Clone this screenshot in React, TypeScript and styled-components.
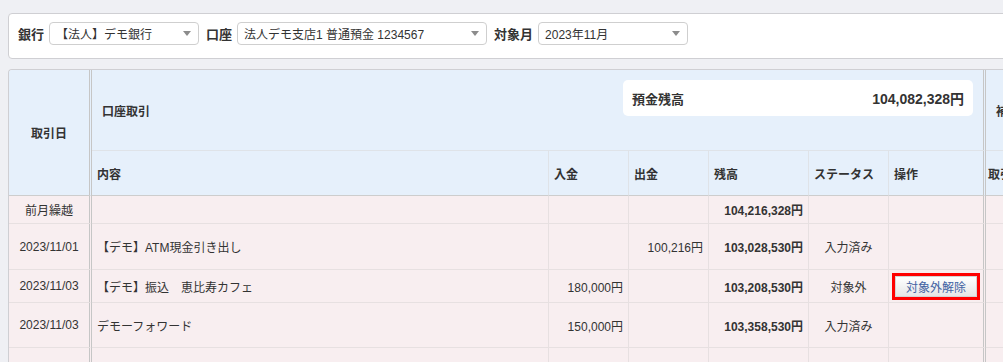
import React from "react";
import styled, { createGlobalStyle } from "styled-components";

const GlobalStyle = createGlobalStyle`
  html, body {
    margin: 0;
    padding: 0;
    overflow: hidden;
    background: #eff0f4;
  }
  body {
    font-family: "Liberation Sans", "Noto Sans CJK JP", sans-serif;
    font-size: 12px;
    color: #333;
  }
`;

const Page = styled.div`
  width: 1300px;
  padding: 13px 0 0 8px;
  display: flex;
  flex-direction: column;
  gap: 10px;
`;

const FilterBar = styled.div`
  display: flex;
  align-items: center;
  box-sizing: border-box;
  height: 46px;
  padding: 0 0 5px 9px;
  background: #fff;
  border: 1px solid #cfcfd3;
  border-radius: 4px 0 0 4px;
`;

const FilterLabel = styled.span`
  font-size: 13px;
  font-weight: bold;
  margin-right: 5px;
`;

const SelectBox = styled.div<{ $w: number }>`
  width: ${(p) => p.$w}px;
  height: 23px;
  box-sizing: border-box;
  margin-right: 7px;
  padding: 0 7px 0 6px;
  display: flex;
  align-items: center;
  justify-content: space-between;
  background: #fff;
  border: 1px solid #cfcfcf;
  border-radius: 4px;
  font-size: 12px;
  color: #333;
`;

const Caret = styled.span`
  width: 0;
  height: 0;
  border-left: 4px solid transparent;
  border-right: 4px solid transparent;
  border-top: 5px solid #8c8c8c;
`;

const Grid = styled.div`
  display: grid;
  grid-template-columns: 83px 457px 80px 80px 100px 80px 97px 220px;
  grid-template-rows: 81px 45px 28px 46px 33px 45px 60px;
  border-top: 1px solid #cfcfd3;
  border-left: 1px solid #cfcfd3;
  border-radius: 4px 0 0 0;
  overflow: hidden;
`;

const Cell = styled.div<{
  $head?: boolean;
  $align?: "left" | "center" | "right";
  $double?: boolean;
  $bold?: boolean;
  $pad?: number;
  $last?: boolean;
}>`
  box-sizing: border-box;
  display: flex;
  align-items: center;
  justify-content: ${(p) =>
    p.$align === "center" ? "center" : p.$align === "right" ? "flex-end" : "flex-start"};
  padding: 0 ${(p) => p.$pad ?? 5}px;
  background: ${(p) => (p.$head ? "#e6f0fb" : "#f8eef0")};
  border-right: ${(p) => (p.$double ? "3px double #c6c6c6" : p.$head ? "1px solid #dfe3e8" : "1px solid #e7e0e1")};
  border-bottom: ${(p) => (p.$last ? "1px solid #cdcdcd" : p.$head ? "1px solid #dfe3e8" : "1px solid #e7e0e1")};
  font-weight: ${(p) => (p.$head || p.$bold ? "bold" : "normal")};
  white-space: nowrap;
  overflow: hidden;
`;

const DateHead = styled(Cell)`
  grid-row: span 2;
  justify-content: center;
`;

const GroupHead = styled(Cell)`
  grid-column: span 6;
  justify-content: space-between;
  align-items: center;
  padding: 0 10px;
`;

const BalanceBox = styled.div`
  align-self: flex-start;
  margin-top: 10px;
  width: 350px;
  height: 36px;
  box-sizing: border-box;
  padding: 0 9px;
  display: flex;
  align-items: center;
  justify-content: space-between;
  background: #fff;
  border-radius: 5px;
`;

const BalanceLabel = styled.span`
  font-size: 13px;
  font-weight: bold;
`;

const BalanceValue = styled.span`
  font-size: 14px;
  font-weight: bold;
`;

const Highlight = styled.span`
  display: inline-flex;
  border: 3px solid #f00;
`;

const ActionButton = styled.button`
  width: 82px;
  height: 21px;
  padding: 0;
  font-family: inherit;
  font-size: 12px;
  color: #4263a3;
  background: linear-gradient(#ffffff, #e6e6e6);
  border: 1px solid #d4d4d4;
  border-radius: 0;
`;

type Row = {
  date: string;
  content: string;
  income: string;
  outgo: string;
  balance: string;
  status: string;
  action?: boolean;
};

const rows: Row[] = [
  { date: "前月繰越", content: "", income: "", outgo: "", balance: "104,216,328円", status: "" },
  {
    date: "2023/11/01",
    content: "【デモ】ATM現金引き出し",
    income: "",
    outgo: "100,216円",
    balance: "103,028,530円",
    status: "入力済み",
  },
  {
    date: "2023/11/03",
    content: "【デモ】振込　恵比寿カフェ",
    income: "180,000円",
    outgo: "",
    balance: "103,208,530円",
    status: "対象外",
    action: true,
  },
  {
    date: "2023/11/03",
    content: "デモーフォワード",
    income: "150,000円",
    outgo: "",
    balance: "103,358,530円",
    status: "入力済み",
  },
  { date: "", content: "", income: "", outgo: "", balance: "", status: "" },
];

const subHeads = ["内容", "入金", "出金", "残高", "ステータス", "操作"];

export default function App() {
  return (
    <>
      <GlobalStyle />
      <Page>
        <FilterBar>
          <FilterLabel>銀行</FilterLabel>
          <SelectBox $w={150}>
            <span>【法人】デモ銀行</span>
            <Caret />
          </SelectBox>
          <FilterLabel>口座</FilterLabel>
          <SelectBox $w={250}>
            <span>法人デモ支店1 普通預金 1234567</span>
            <Caret />
          </SelectBox>
          <FilterLabel>対象月</FilterLabel>
          <SelectBox $w={150}>
            <span>2023年11月</span>
            <Caret />
          </SelectBox>
        </FilterBar>

        <Grid>
          <DateHead $head $double $last>
            取引日
          </DateHead>
          <GroupHead $head $double>
            <span>口座取引</span>
            <BalanceBox>
              <BalanceLabel>預金残高</BalanceLabel>
              <BalanceValue>104,082,328円</BalanceValue>
            </BalanceBox>
          </GroupHead>
          <Cell $head $pad={10}>
            補助科目
          </Cell>

          {subHeads.map((h, i) => (
            <Cell key={h} $head $last $double={i === subHeads.length - 1}>
              {h}
            </Cell>
          ))}
          <Cell $head $last $pad={2}>
            取引先
          </Cell>

          {rows.map((r, i) => (
            <React.Fragment key={i}>
              <Cell $align="center" $double>
                {r.date}
              </Cell>
              <Cell>{r.content}</Cell>
              <Cell $align="right">{r.income}</Cell>
              <Cell $align="right">{r.outgo}</Cell>
              <Cell $align="right" $bold>
                {r.balance}
              </Cell>
              <Cell $align="center">{r.status}</Cell>
              <Cell $align="center" $double>
                {r.action && (
                  <Highlight>
                    <ActionButton>対象外解除</ActionButton>
                  </Highlight>
                )}
              </Cell>
              <Cell />
            </React.Fragment>
          ))}
        </Grid>
      </Page>
    </>
  );
}
